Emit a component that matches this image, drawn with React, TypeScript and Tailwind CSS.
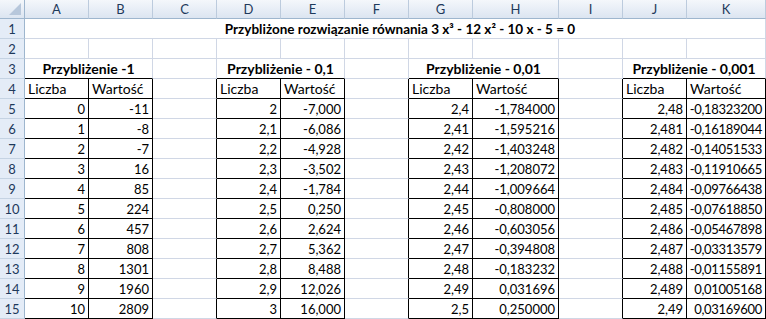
import React from "react";

const COLS = ["A", "B", "C", "D", "E", "F", "G", "H", "I", "J", "K"];
const TABLE_COLS = new Set([0, 1, 3, 4, 6, 7, 9, 10]);
const PRE_TABLE = new Set([2, 5, 8]);

const A = ["0", "1", "2", "3", "4", "5", "6", "7", "8", "9", "10"];
const B = ["-11", "-8", "-7", "16", "85", "224", "457", "808", "1301", "1960", "2809"];
const D = ["2", "2,1", "2,2", "2,3", "2,4", "2,5", "2,6", "2,7", "2,8", "2,9", "3"];
const E = ["-7,000", "-6,086", "-4,928", "-3,502", "-1,784", "0,250", "2,624", "5,362", "8,488", "12,026", "16,000"];
const G = ["2,4", "2,41", "2,42", "2,43", "2,44", "2,45", "2,46", "2,47", "2,48", "2,49", "2,5"];
const H = ["-1,784000", "-1,595216", "-1,403248", "-1,208072", "-1,009664", "-0,808000", "-0,603056", "-0,394808", "-0,183232", "0,031696", "0,250000"];
const J = ["2,48", "2,481", "2,482", "2,483", "2,484", "2,485", "2,486", "2,487", "2,488", "2,489", "2,49"];
const K = ["-0,18323200", "-0,16189044", "-0,14051533", "-0,11910665", "-0,09766438", "-0,07618850", "-0,05467898", "-0,03313579", "-0,01155891", "0,01005168", "0,03169600"];

const font = { fontFamily: "Lato, 'Liberation Sans', sans-serif" };

function Cell({
  row,
  col,
  span = 1,
  children,
  align = "left",
  bold = false,
  size = "text-[13px]",
}: {
  row: number;
  col: number;
  span?: number;
  children?: React.ReactNode;
  align?: "left" | "right" | "center";
  bold?: boolean;
  size?: string;
}) {
  const last = col + span - 1;
  const rightBlack = row >= 4 && (TABLE_COLS.has(last) || PRE_TABLE.has(last));
  const bottomBlack = row >= 3 && TABLE_COLS.has(col);
  const cls = [
    "flex items-end pb-[2px] overflow-visible whitespace-nowrap border-r border-b leading-none text-black",
    size,
    rightBlack ? "border-r-black" : "border-r-[#d0d7e5]",
    bottomBlack ? "border-b-black" : "border-b-[#d0d7e5]",
    align === "right" ? "justify-end pr-[3px]" : align === "center" ? "justify-center" : "justify-start pl-[3px]",
    bold ? "font-bold" : "",
    row >= 5 && col === 10 ? "tracking-[-0.3px]" : "",
  ].join(" ");
  return (
    <div className={cls} style={{ gridColumn: `span ${span} / span ${span}` }}>
      {children}
    </div>
  );
}

function RowHeader({ n }: { n: number }) {
  return (
    <div className="flex items-end justify-center pb-[2px] bg-[#e4ecf7] border-r border-b border-r-[#9eb6ce] border-b-[#c5d3e3] text-[13px] leading-none text-[#1e395b]">
      {n}
    </div>
  );
}

export default function App() {
  const cells: React.ReactNode[] = [];

  cells.push(
    <div key="corner" className="relative bg-gradient-to-b from-[#f4f7fb] to-[#dce5f1] border-r border-b border-r-[#9eb6ce] border-b-[#9eb6ce]">
      <svg className="absolute right-[3px] bottom-[3px]" width="12" height="12" viewBox="0 0 12 12">
        <polygon points="12,0 12,12 0,12" fill="#b7c7db" />
      </svg>
    </div>
  );
  COLS.forEach((c) => {
    cells.push(
      <div
        key={"h" + c}
        className="flex items-end justify-center pb-[2px] bg-gradient-to-b from-[#f4f7fb] to-[#dce5f1] border-r border-b border-r-[#bccbdd] border-b-[#9eb6ce] text-[13px] leading-none text-[#1e395b]"
      >
        {c}
      </div>
    );
  });

  cells.push(<RowHeader key="r1" n={1} />);
  cells.push(
    <Cell key="t1" row={1} col={0} span={11} align="center" bold size="text-[13.5px]">
      <span className="pl-[10px]">Przybliżone rozwiązanie równania 3 x³ - 12 x² - 10 x - 5 = 0</span>
    </Cell>
  );

  cells.push(<RowHeader key="r2" n={2} />);
  COLS.forEach((c, i) => cells.push(<Cell key={"r2" + c} row={2} col={i} />));

  cells.push(<RowHeader key="r3" n={3} />);
  cells.push(<Cell key="r3a" row={3} col={0} span={2} align="center" bold size="text-[14px]">Przybliżenie -1</Cell>);
  cells.push(<Cell key="r3c" row={3} col={2} />);
  cells.push(<Cell key="r3d" row={3} col={3} span={2} align="center" bold size="text-[14px]">Przybliżenie - 0,1</Cell>);
  cells.push(<Cell key="r3f" row={3} col={5} />);
  cells.push(<Cell key="r3g" row={3} col={6} span={2} align="center" bold size="text-[14px]">Przybliżenie - 0,01</Cell>);
  cells.push(<Cell key="r3i" row={3} col={8} />);
  cells.push(<Cell key="r3j" row={3} col={9} span={2} align="center" bold size="text-[14px]">Przybliżenie - 0,001</Cell>);

  cells.push(<RowHeader key="r4" n={4} />);
  COLS.forEach((c, i) => {
    let content: string | undefined;
    if (TABLE_COLS.has(i)) content = i % 3 === 0 ? "Liczba" : "Wartość";
    cells.push(
      <Cell key={"r4" + c} row={4} col={i} size="text-[14px]">
        {content}
      </Cell>
    );
  });

  const data: Record<number, string[]> = { 0: A, 1: B, 3: D, 4: E, 6: G, 7: H, 9: J, 10: K };
  for (let r = 0; r < 11; r++) {
    const row = r + 5;
    cells.push(<RowHeader key={"r" + row} n={row} />);
    COLS.forEach((c, i) => {
      cells.push(
        <Cell key={"r" + row + c} row={row} col={i} align="right">
          {data[i] ? data[i][r] : undefined}
        </Cell>
      );
    });
  }

  return (
    <div className="w-[766px] h-[319px] bg-white overflow-hidden" style={font}>
      <div className="grid grid-cols-[25px_64px_64px_64px_64px_64px_64px_64px_86px_64px_64px_79px] grid-rows-[19px_repeat(15,20px)]">
        {cells}
      </div>
    </div>
  );
}
